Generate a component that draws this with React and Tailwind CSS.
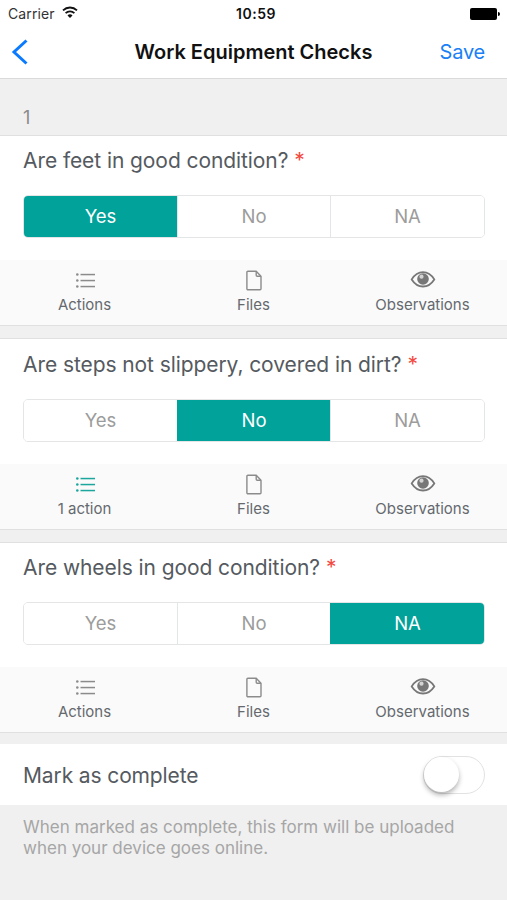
import React from 'react';

function WifiIcon() {
  return (
    <svg className="mb-[2px] ml-[7px] h-[13px] w-[16px]" viewBox="0 0 16 13" fill="none" stroke="#111" strokeWidth="1.8">
      <path d="M1 4.4C5 .5 11 .5 15 4.4" />
      <path d="M3.6 7.1c2.5-2.4 6.300-2.400 8.800 0" />
      <path d="M8 12 5.500 9.400c1.400-1.400 3.600-1.400 5 0z" fill="#111" stroke="none" />
    </svg>
  );
}

function ListIcon({ active }) {
  return (
    <svg className={active ? 'ml-[2px] h-[22px] w-[22px] text-[#1ba79d]' : 'ml-[2px] h-[22px] w-[22px] text-[#8b8b8b]'} viewBox="0 0 22 22" fill="currentColor">
      <circle cx="2.300" cy="4.500" r="1.300" />
      <circle cx="2.300" cy="10.500" r="1.300" />
      <circle cx="2.300" cy="16.500" r="1.300" />
      <rect x="5.500" y="3.800" width="14.500" height="1.500" />
      <rect x="5.500" y="9.800" width="14.500" height="1.500" />
      <rect x="5.500" y="15.800" width="14.500" height="1.500" />
    </svg>
  );
}

function FileIcon() {
  return (
    <svg className="h-[22px] w-[22px]" viewBox="0 0 22 22" fill="none" stroke="#8b8b8b" strokeWidth="1.400">
      <path d="M4.900 1.300h8.300l4.800 5v12.500a1 1 0 0 1-1 1H4.900a1 1 0 0 1-1-1V2.300a1 1 0 0 1 1-1z" />
      <path d="M13.200 1.300v4a1 1 0 0 0 1 1h3.800" />
    </svg>
  );
}

function EyeIcon() {
  return (
    <svg className="h-[22px] w-[26px]" viewBox="0 0 26 22">
      <path d="M1.700 9.400C4.700 4.500 8.500 2.100 13 2.100S21.300 4.500 24.300 9.400C21.300 14.100 17.500 16.500 13 16.500S4.700 14.100 1.700 9.400z" fill="none" stroke="#777" strokeWidth="1.800" />
      <circle cx="13" cy="9" r="5.800" fill="#777" />
      <circle cx="11.500" cy="6.700" r="2.100" fill="#d2d3d3" />
    </svg>
  );
}

const OPTIONS = ['Yes', 'No', 'NA'];

function Segments({ value }) {
  return (
    <div className="ml-[23px] mr-[22px] grid h-[43px] shrink-0 grid-cols-[153px_153px_1fr] overflow-hidden rounded-[5px] border border-[#e4e5e6]">
      {OPTIONS.map((option, i) => (
        <div
          key={option}
          className={
            'flex items-center justify-center text-[18.500px] ' +
            (i > 0 ? 'border-l ' : '') +
            (option === value ? 'border-[#01a299] bg-[#01a299] text-white' : 'border-[#e4e5e6] bg-white text-[#9c9c9c]')
          }
        >
          {option}
        </div>
      ))}
    </div>
  );
}

function Tool({ icon, label }) {
  return (
    <div className="flex flex-col items-center pt-[10px]">
      {icon}
      <span className="mt-[3px] text-[15px] leading-[20px] text-[#65696e]">{label}</span>
    </div>
  );
}

function Question({ title, value, actions, active, roomy }) {
  return (
    <section className="flex shrink-0 flex-col border-y border-[#dfe0e1] bg-white">
      <h2
        className={
          'flex shrink-0 pl-[23px] text-[21px] leading-[30px] tracking-[-0.080px] text-[#555a60] ' +
          (roomy ? 'h-[60px] pt-[11px]' : 'h-[59px] pt-[10px]')
        }
      >
        {title}
        <span className="ml-[6px] text-[21px] leading-[30px] text-[#f4493f]">*</span>
      </h2>
      <Segments value={value} />
      <div className="mt-[22px] grid h-[65px] grid-cols-3 bg-[#fafafb]">
        <Tool icon={<ListIcon active={active} />} label={actions} />
        <Tool icon={<FileIcon />} label="Files" />
        <Tool icon={<EyeIcon />} label="Observations" />
      </div>
    </section>
  );
}

export default function App() {
  return (
    <div className="flex h-[900px] w-[507px] flex-col overflow-hidden bg-[#f0f0f0] font-['Inter','Liberation_Sans',sans-serif]">
      <header className="h-[79px] shrink-0 border-b border-[#dadada] bg-white">
        <div className="grid h-[27px] grid-cols-3 items-center pl-[8px] pr-[7px] text-[14px]">
          <div className="flex items-center tracking-[0.1px] text-[#333]">
            Carrier
            <WifiIcon />
          </div>
          <div className="pl-[4px] text-center font-semibold tracking-[0.500px] text-[#111]">10:59</div>
          <div className="flex items-center justify-end">
            <div className="h-[12px] w-[27px] rounded-[2px] bg-black" />
            <div className="ml-[1px] h-[4px] w-[2px] rounded-r-full bg-black" />
          </div>
        </div>
        <div className="grid h-[50px] grid-cols-[80px_1fr_80px] items-center">
          <svg className="ml-[10px] h-[28px] w-[18px]" viewBox="0 0 18 28" fill="none" stroke="#0a7aff" strokeWidth="3">
            <path d="M16.500 2.500 4 14l12.500 11.500" />
          </svg>
          <h1 className="text-center text-[20px] font-semibold text-[#111]">Work Equipment Checks</h1>
          <div className="pr-[22px] text-right text-[20px] tracking-[-0.2px] text-[#1a80f5]">Save</div>
        </div>
      </header>
      <div className="h-[56px] shrink-0 pl-[23px] pt-[26px] text-[18px] leading-[26px] text-[#8a8a8a]">1</div>
      <Question title="Are feet in good condition?" value="Yes" actions="Actions" />
      <div className="h-[12px] shrink-0" />
      <Question title="Are steps not slippery, covered in dirt?" value="No" actions="1 action" active roomy />
      <div className="h-[12px] shrink-0" />
      <Question title="Are wheels in good condition?" value="NA" actions="Actions" />
      <div className="h-[11px] shrink-0" />
      <div className="flex h-[61px] shrink-0 items-center justify-between bg-white pl-[23px] pr-[22px]">
        <span className="pt-[2px] text-[21px] tracking-[-0.120px] text-[#555a60]">Mark as complete</span>
        <div className="flex h-[38px] w-[62px] items-center rounded-full border-[1.500px] border-[#e2e2e2] bg-white">
          <div className="h-[35px] w-[35px] rounded-full bg-white shadow-[0_3px_5px_rgba(0,0,0,0.3)]" />
        </div>
      </div>
      <p className="pl-[23px] pt-[12px] text-[17px] leading-[21px] text-[#a6a6a6]">
        When marked as complete, this form will be uploaded
        <br />
        when your device goes online.
      </p>
    </div>
  );
}
